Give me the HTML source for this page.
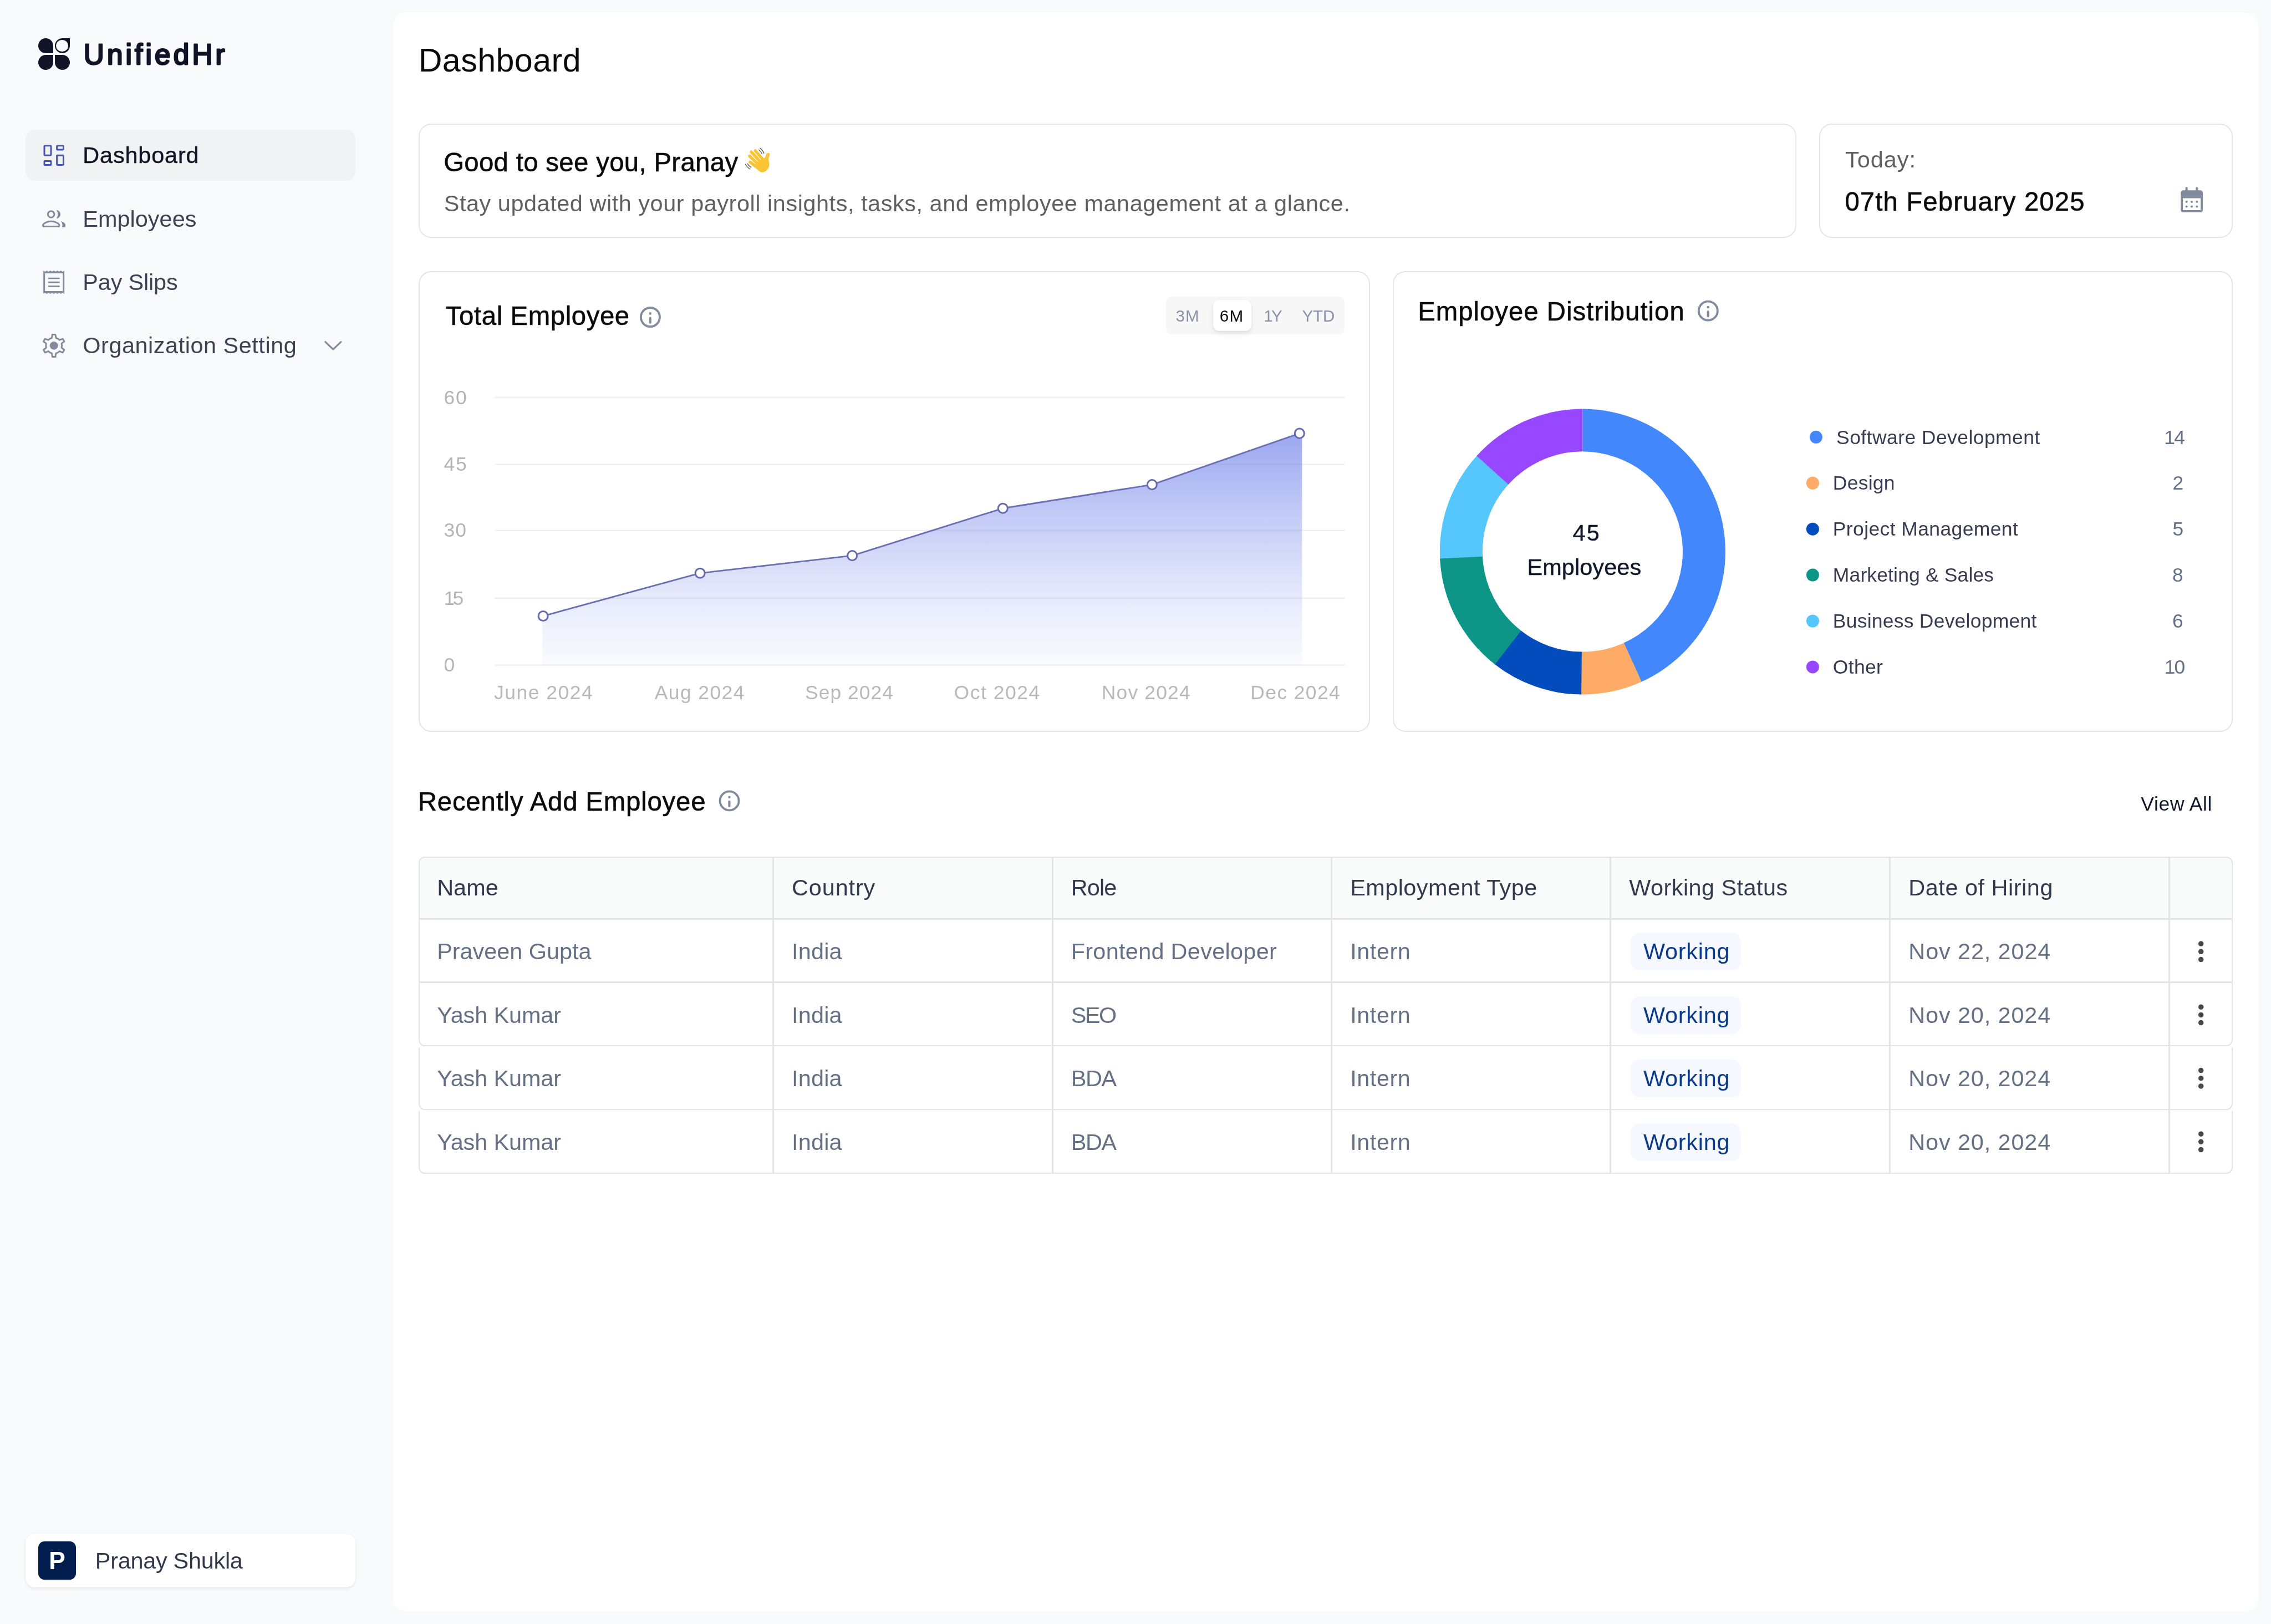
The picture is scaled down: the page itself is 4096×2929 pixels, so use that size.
<!DOCTYPE html>
<html lang="en">
<head>
<meta charset="utf-8">
<title>UnifiedHr – Dashboard</title>
<style>
html,body{margin:0;padding:0;background:#f9fafc;overflow:hidden;width:4096px;height:2929px}
#app{position:relative;width:1440px;height:1029.72px;zoom:2.8444444;background:#f9fafc;font-family:"Liberation Sans",sans-serif;overflow:hidden}
#app div,#app span,#app svg{position:absolute;box-sizing:border-box}
.t{white-space:nowrap;line-height:20px;font-weight:400}
.panel{left:249.33px;top:8px;width:1182.5px;height:1013.7px;background:#fff;border-radius:8px}
.card{background:#fff;border:1px solid #e6e6e6;border-radius:8px}
.card2{background:#fff;border:1px solid #e2e4ea;border-radius:8px}
.navact{left:16.1px;top:82.3px;width:209.3px;height:32.3px;background:#f1f2f4;border-radius:6px}
.user{left:16.2px;top:972.5px;width:209px;height:34.1px;background:#fff;border-radius:6px;box-shadow:0 1px 2px rgba(16,24,40,.07),0 0 1px rgba(16,24,40,.04)}
.avatar{left:24.15px;top:977.4px;width:24.1px;height:24.2px;background:#011d4d;border-radius:4px}
.petal{background:#101426}
.seg{left:739.2px;top:188px;width:113.5px;height:24.1px;background:#f7f7f8;border-radius:4px}
.pill{left:769.3px;top:190.2px;width:24.2px;height:19.8px;background:#fff;border-radius:4px;box-shadow:0 1px 2px rgba(16,24,40,.06),0 2px 5px rgba(16,24,40,.05)}
.badge{left:1034px;width:70px;height:23.9px;background:#f5f8ff;border-radius:6px}
.tb{border:1px solid #e4e4e7}
.vl{width:1px;background:#e4e4e7;top:543.5px;height:200.4px}
.hl{height:1px;background:#e4e4e7;left:265.5px;width:1150px}
</style>
</head>
<body>
<div id="app">
  <!-- sidebar -->
  <div class="petal" style="left:24.2px;top:24.3px;width:9.54px;height:9.54px;border-radius:4.77px 4.77px 0 4.77px"></div>
  <div class="petal" style="left:34.66px;top:24.3px;width:9.54px;height:9.54px;border-radius:4.77px 0 4.77px 4.77px"></div>
  <div style="left:35.63px;top:25.27px;width:7.6px;height:7.6px;border-radius:50%;background:#f9fafc"></div>
  <div class="petal" style="left:24.2px;top:34.76px;width:9.54px;height:9.54px;border-radius:4.77px 0 4.77px 4.77px"></div>
  <div class="petal" style="left:34.66px;top:34.76px;width:9.54px;height:9.54px;border-radius:0 4.77px 4.77px 4.77px"></div>
  <div class="navact"></div>
  <div class="user"></div>
  <div class="avatar"></div>
  <!-- main panel -->
  <div class="panel"></div>
  <div class="card" style="left:265.5px;top:78.4px;width:873.6px;height:72.4px"></div>
  <div class="card" style="left:1153.4px;top:78.4px;width:262.3px;height:72.4px"></div>
  <div class="card2" style="left:265.5px;top:171.8px;width:603.1px;height:292.4px"></div>
  <div class="card2" style="left:883.1px;top:171.8px;width:532.7px;height:292.4px"></div>
  <div class="seg"></div>
  <div class="pill"></div>
  <!-- table -->
  <div style="left:265.5px;top:543px;width:1150.2px;height:40.3px;background:#f9fafa;border-radius:4px 4px 0 0"></div>
  <div class="tb" style="left:265.5px;top:543px;width:1150.2px;height:120.5px;border-radius:4px"></div>
  <div class="tb" style="left:265.3px;top:664.2px;width:1150.5px;height:39.6px;border-top:none;border-radius:0 0 4px 4px"></div>
  <div class="tb" style="left:265.3px;top:704.5px;width:1150.5px;height:39.6px;border-top:none;border-radius:0 0 4px 4px"></div>
  <div class="hl" style="top:582.3px"></div>
  <div class="hl" style="top:622.3px"></div>
  <div class="vl" style="left:489.7px"></div>
  <div class="vl" style="left:666.8px"></div>
  <div class="vl" style="left:843.8px"></div>
  <div class="vl" style="left:1020.75px"></div>
  <div class="vl" style="left:1197.9px"></div>
  <div class="vl" style="left:1374.85px"></div>
  <div class="badge" style="top:591.5px"></div>
  <div class="badge" style="top:631.6px"></div>
  <div class="badge" style="top:671.9px"></div>
  <div class="badge" style="top:712.2px"></div>
<svg style="left:0;top:0" width="1440" height="1030" viewBox="0 0 1440 1030">
<defs><linearGradient id="ag" x1="0" y1="274.8" x2="0" y2="421.7" gradientUnits="userSpaceOnUse"><stop offset="0" stop-color="#5d71e6" stop-opacity="0.62"/><stop offset="0.35" stop-color="#5d71e6" stop-opacity="0.37"/><stop offset="0.7" stop-color="#5d71e6" stop-opacity="0.155"/><stop offset="1" stop-color="#5d71e6" stop-opacity="0.03"/></linearGradient></defs>
<text x="53.0" y="40.7" font-family="Liberation Sans, sans-serif" font-size="18.0" fill="#101426" stroke="#101426" stroke-width="1.0" stroke-linejoin="round" textLength="89.6" lengthAdjust="spacing">UnifiedHr</text>
<g fill="none" stroke="#4353b8" stroke-width="1.04">
<rect x="28.12" y="92.42" width="4.23" height="6.06" rx="0.35"/>
<rect x="36.07" y="92.42" width="4.16" height="2.51" rx="0.35"/>
<rect x="28.12" y="102.12" width="4.23" height="2.46" rx="0.35"/>
<rect x="36.07" y="98.52" width="4.16" height="6.06" rx="0.35"/>
</g>
<g transform="translate(21.0938,124.8047) scale(0.017318)" fill="#828a9d">
<circle cx="652" cy="640" r="118" fill="none" stroke="#828a9d" stroke-width="60"/>
<path d="M395,1085 L915,1085 Q955,1085 955,1045 C955,975 800,900 652,900 C505,900 355,975 355,1045 Q355,1085 395,1085 Z" fill="none" stroke="#828a9d" stroke-width="60" stroke-linejoin="round"/>
<path d="M845,485 C945,490 995,560 995,640 C995,720 945,785 845,790 C880,750 897,700 897,640 C897,580 880,530 845,485 Z"/>
<path d="M1015,895 C1110,920 1180,970 1180,1045 C1180,1090 1155,1115 1120,1115 L1050,1115 C1080,1060 1075,980 1015,895 Z"/>
</g>
<g transform="translate(21.0938,165.2344) scale(0.017318)" fill="#828a9d">
<path fill-rule="evenodd" d="M370,365 L430,405 L495,365 L560,405 L625,365 L690,405 L755,365 L820,405 L880,365 L945,405 L1010,365 L1075,405 L1140,365 L1140,1220 L1075,1180 L1010,1220 L945,1180 L880,1220 L820,1180 L755,1220 L690,1180 L625,1220 L560,1180 L495,1220 L430,1180 L370,1220 Z M430,465 L1080,465 L1080,1115 L430,1115 Z"/>
<path d="M572,650 H943" stroke="#828a9d" stroke-width="55" stroke-linecap="round" fill="none"/>
<path d="M572,795 H943" stroke="#828a9d" stroke-width="55" stroke-linecap="round" fill="none"/>
<path d="M572,940 H943" stroke="#828a9d" stroke-width="55" stroke-linecap="round" fill="none"/>
</g>
<g transform="translate(21.0938,204.9609) scale(0.017318)">
<path d="M679.4,537.9 L699.4,413.8 L810.6,413.8 L830.6,537.9 A292,292 0 0 1 961.5,613.5 L1079.0,568.7 L1134.6,665.1 L1037.1,744.4 A292,292 0 0 1 1037.1,895.6 L1134.6,974.9 L1079.0,1071.3 L961.5,1026.5 A292,292 0 0 1 830.6,1102.1 L810.6,1226.2 L699.4,1226.2 L679.4,1102.1 A292,292 0 0 1 548.5,1026.5 L431.0,1071.3 L375.4,974.9 L472.9,895.6 A292,292 0 0 1 472.9,744.4 L375.4,665.1 L431.0,568.7 L548.5,613.5 A292,292 0 0 1 679.4,537.9 Z" fill="none" stroke="#828a9d" stroke-width="60" stroke-linejoin="round"/>
<circle cx="755" cy="820" r="150" fill="#828a9d"/>
</g>
<path d="M206.3,216.8 L211.25,221.5 L216.2,216.8" fill="none" stroke="#828a9d" stroke-width="1.1" stroke-linecap="round" stroke-linejoin="round"/>
<g transform="translate(412.35,201.1)"><circle r="5.98" fill="none" stroke="#828a9d" stroke-width="1.36"/><circle cx="-0.05" cy="-2.33" r="0.8" fill="#828a9d"/><path d="M-0.05,0.5 V3.4" stroke="#828a9d" stroke-width="1.45" stroke-linecap="round"/></g>
<g transform="translate(1083.1,197.1)"><circle r="5.98" fill="none" stroke="#828a9d" stroke-width="1.36"/><circle cx="-0.05" cy="-2.33" r="0.8" fill="#828a9d"/><path d="M-0.05,0.5 V3.4" stroke="#828a9d" stroke-width="1.45" stroke-linecap="round"/></g>
<g transform="translate(462.5,507.8)"><circle r="5.98" fill="none" stroke="#828a9d" stroke-width="1.36"/><circle cx="-0.05" cy="-2.33" r="0.8" fill="#828a9d"/><path d="M-0.05,0.5 V3.4" stroke="#828a9d" stroke-width="1.45" stroke-linecap="round"/></g>
<g fill="#828a9d">
<path fill-rule="evenodd" d="M1384.25,120.66 H1395.3 A1.45,1.45 0 0 1 1396.75,122.11 V133.15 A1.45,1.45 0 0 1 1395.3,134.6 H1384.25 A1.45,1.45 0 0 1 1382.8,133.15 V122.11 A1.45,1.45 0 0 1 1384.25,120.66 Z M1384.1,125.66 V133.28 H1395.4 V125.66 Z"/>
<path d="M1386.45,119.3 V122 M1393.0,119.3 V122" stroke="#828a9d" stroke-width="1.45" stroke-linecap="round"/>
<circle cx="1386.45" cy="127.9" r="0.73"/>
<circle cx="1386.45" cy="130.95" r="0.73"/>
<circle cx="1389.74" cy="127.9" r="0.73"/>
<circle cx="1389.74" cy="130.95" r="0.73"/>
<circle cx="1393.0" cy="127.9" r="0.73"/>
<circle cx="1393.0" cy="130.95" r="0.73"/>
</g>
<g transform="translate(465.8203,87.8906) scale(0.017318)">
<path d="M770,930 L1020,700 C1060,730 1100,720 1125,670 C1140,620 1140,570 1200,535 C1250,510 1300,540 1290,590 C1270,650 1235,700 1245,790 C1275,900 1285,1000 1220,1100 C1150,1210 1010,1280 900,1200 C840,1150 800,1040 770,930 Z" fill="#fcc332"/>
<path d="M757,442 L1010,735" stroke="#fcc332" stroke-width="108" stroke-linecap="round"/>
<path d="M607,485 L905,810" stroke="#fcc332" stroke-width="108" stroke-linecap="round"/>
<path d="M547,640 L845,925" stroke="#fcc332" stroke-width="108" stroke-linecap="round"/>
<path d="M565,860 L860,1085" stroke="#fcc332" stroke-width="108" stroke-linecap="round"/>
<path d="M770,930 L1000,1150 L900,1200 Z" fill="#fcc332"/>
<g fill="none" stroke="#555" stroke-width="27" stroke-linecap="round">
<path d="M932,352 C1000,400 1050,470 1075,540"/><path d="M888,412 C940,450 980,505 1000,560"/>
<path d="M395,940 C430,1010 490,1075 568,1115"/><path d="M467,917 C495,970 540,1015 598,1048"/>
</g></g>
<path d="M313.8,252.0 H852.7" stroke="#f0f0f5" stroke-width="1"/>
<path d="M313.8,294.4 H852.7" stroke="#f0f0f5" stroke-width="1"/>
<path d="M313.8,336.3 H852.7" stroke="#f0f0f5" stroke-width="1"/>
<path d="M313.8,379.3 H852.7" stroke="#f0f0f5" stroke-width="1"/>
<path d="M313.8,421.7 H852.7" stroke="#f0f0f5" stroke-width="1"/>
<path d="M343.9,421.7 L343.9,390.75 L344.4,390.6 L443.9,363.4 L540.4,352.3 L635.9,322.3 L730.5,307.3 L824.0,274.8 L825.6,274.3 L825.6,421.7 Z" fill="url(#ag)"/>
<path d="M344.4,390.6 L443.9,363.4 L540.4,352.3 L635.9,322.3 L730.5,307.3 L824.0,274.8" fill="none" stroke="#6b70b2" stroke-width="1.0" stroke-linejoin="round"/>
<circle cx="344.4" cy="390.6" r="3.0" fill="#fff" stroke="#666bb0" stroke-width="1.05"/>
<circle cx="443.9" cy="363.4" r="3.0" fill="#fff" stroke="#666bb0" stroke-width="1.05"/>
<circle cx="540.4" cy="352.3" r="3.0" fill="#fff" stroke="#666bb0" stroke-width="1.05"/>
<circle cx="635.9" cy="322.3" r="3.0" fill="#fff" stroke="#666bb0" stroke-width="1.05"/>
<circle cx="730.5" cy="307.3" r="3.0" fill="#fff" stroke="#666bb0" stroke-width="1.05"/>
<circle cx="824.0" cy="274.8" r="3.0" fill="#fff" stroke="#666bb0" stroke-width="1.05"/>
<path d="M1003.50,259.25 A90.55,90.55 0 0 1 1040.47,432.46 L1029.43,407.76 A63.5,63.5 0 0 0 1003.50,286.30 Z" fill="#4287fb"/>
<path d="M1040.91,432.26 A90.55,90.55 0 0 1 1002.24,440.34 L1002.61,413.29 A63.5,63.5 0 0 0 1029.73,407.63 Z" fill="#fdab66"/>
<path d="M1002.71,440.35 A90.55,90.55 0 0 1 947.50,420.96 L964.23,399.70 A63.5,63.5 0 0 0 1002.95,413.30 Z" fill="#024cbe"/>
<path d="M947.88,421.25 A90.55,90.55 0 0 1 913.04,353.75 L940.06,352.57 A63.5,63.5 0 0 0 964.49,399.91 Z" fill="#0d9688"/>
<path d="M913.06,354.22 A90.55,90.55 0 0 1 936.69,288.68 L956.65,306.94 A63.5,63.5 0 0 0 940.08,352.90 Z" fill="#56c7fd"/>
<path d="M936.37,289.03 A90.55,90.55 0 0 1 1003.50,259.25 L1003.50,286.30 A63.5,63.5 0 0 0 956.42,307.19 Z" fill="#9747ff"/>
<circle cx="1151.5" cy="277.14" r="4.05" fill="#4287fb"/>
<circle cx="1149.4" cy="306.3" r="4.05" fill="#fdab66"/>
<circle cx="1149.4" cy="335.45" r="4.05" fill="#024cbe"/>
<circle cx="1149.4" cy="364.6" r="4.05" fill="#0d9688"/>
<circle cx="1149.4" cy="393.75" r="4.05" fill="#56c7fd"/>
<circle cx="1149.4" cy="422.9" r="4.05" fill="#9747ff"/>
<circle cx="1395.6" cy="598.4" r="1.67" fill="#4a4a4a"/>
<circle cx="1395.6" cy="603.4" r="1.67" fill="#4a4a4a"/>
<circle cx="1395.6" cy="608.4" r="1.67" fill="#4a4a4a"/>
<circle cx="1395.6" cy="638.5" r="1.67" fill="#4a4a4a"/>
<circle cx="1395.6" cy="643.5" r="1.67" fill="#4a4a4a"/>
<circle cx="1395.6" cy="648.5" r="1.67" fill="#4a4a4a"/>
<circle cx="1395.6" cy="678.7" r="1.67" fill="#4a4a4a"/>
<circle cx="1395.6" cy="683.7" r="1.67" fill="#4a4a4a"/>
<circle cx="1395.6" cy="688.7" r="1.67" fill="#4a4a4a"/>
<circle cx="1395.6" cy="719.0" r="1.67" fill="#4a4a4a"/>
<circle cx="1395.6" cy="724.0" r="1.67" fill="#4a4a4a"/>
<circle cx="1395.6" cy="729.0" r="1.67" fill="#4a4a4a"/>
</svg>
<div id="txt" style="left:0;top:0;width:1440px;height:1030px;will-change:transform">
<span class="t" style="left:52.50px;top:88.65px;font-size:14.56px;letter-spacing:0.292px;color:#0f1324;-webkit-text-stroke:0.15px #0f1324">Dashboard</span>
<span class="t" style="left:52.50px;top:128.85px;font-size:14.56px;letter-spacing:0.012px;color:#3e4252">Employees</span>
<span class="t" style="left:52.50px;top:169.05px;font-size:14.56px;letter-spacing:-0.056px;color:#3e4252">Pay Slips</span>
<span class="t" style="left:52.50px;top:209.25px;font-size:14.56px;letter-spacing:0.189px;color:#3e4252">Organization Setting</span>
<span class="t" style="left:31.05px;top:979.89px;font-size:15.60px;letter-spacing:-0.719px;color:#ffffff;font-weight:700">P</span>
<span class="t" style="left:60.40px;top:979.65px;font-size:14.56px;letter-spacing:-0.094px;color:#30374a">Pranay Shukla</span>
<span class="t" style="left:265.30px;top:28.64px;font-size:20.80px;letter-spacing:0.156px;color:#0a0a0a">Dashboard</span>
<span class="t" style="left:281.30px;top:93.13px;font-size:16.64px;letter-spacing:0.118px;color:#0a0a0a;-webkit-text-stroke:0.2px #0a0a0a">Good to see you, Pranay</span>
<span class="t" style="left:281.50px;top:119.05px;font-size:14.56px;letter-spacing:0.195px;color:#606060">Stay updated with your payroll insights, tasks, and employee management at a glance.</span>
<span class="t" style="left:1170.00px;top:91.25px;font-size:14.56px;letter-spacing:0.357px;color:#606060">Today:</span>
<span class="t" style="left:1169.80px;top:118.03px;font-size:16.64px;letter-spacing:0.394px;color:#0a0a0a;-webkit-text-stroke:0.2px #0a0a0a">07th February 2025</span>
<span class="t" style="left:282.60px;top:190.53px;font-size:16.64px;letter-spacing:0.210px;color:#0a0a0a;-webkit-text-stroke:0.2px #0a0a0a">Total Employee</span>
<span class="t" style="left:745.49px;top:190.40px;font-size:10.40px;letter-spacing:0.391px;color:#8a92a6">3M</span>
<span class="t" style="left:773.38px;top:190.40px;font-size:10.40px;letter-spacing:0.398px;color:#0a0a0a">6M</span>
<span class="t" style="left:801.31px;top:190.40px;font-size:10.40px;letter-spacing:-0.930px;color:#8a92a6">1Y</span>
<span class="t" style="left:825.65px;top:190.40px;font-size:10.40px;letter-spacing:-0.047px;color:#8a92a6">YTD</span>
<span class="t" style="left:281.40px;top:242.08px;font-size:12.48px;letter-spacing:0.641px;color:#b5b5b5">60</span>
<span class="t" style="left:281.40px;top:284.48px;font-size:12.48px;letter-spacing:0.609px;color:#b5b5b5">45</span>
<span class="t" style="left:281.40px;top:326.38px;font-size:12.48px;letter-spacing:0.367px;color:#b5b5b5">30</span>
<span class="t" style="left:281.40px;top:369.38px;font-size:12.48px;letter-spacing:-1.242px;color:#b5b5b5">15</span>
<span class="t" style="left:281.40px;top:411.78px;font-size:12.48px;letter-spacing:0.609px;color:#b5b5b5">0</span>
<span class="t" style="left:313.25px;top:429.18px;font-size:12.48px;letter-spacing:0.528px;color:#b9b9b9">June 2024</span>
<span class="t" style="left:415.10px;top:429.18px;font-size:12.48px;letter-spacing:0.489px;color:#b9b9b9">Aug 2024</span>
<span class="t" style="left:510.50px;top:429.18px;font-size:12.48px;letter-spacing:0.351px;color:#b9b9b9">Sep 2024</span>
<span class="t" style="left:604.90px;top:429.18px;font-size:12.48px;letter-spacing:0.536px;color:#b9b9b9">Oct 2024</span>
<span class="t" style="left:698.50px;top:429.18px;font-size:12.48px;letter-spacing:0.401px;color:#b9b9b9">Nov 2024</span>
<span class="t" style="left:792.90px;top:429.18px;font-size:12.48px;letter-spacing:0.476px;color:#b9b9b9">Dec 2024</span>
<span class="t" style="left:899.00px;top:187.63px;font-size:16.64px;letter-spacing:0.356px;color:#0a0a0a;-webkit-text-stroke:0.2px #0a0a0a">Employee Distribution</span>
<span class="t" style="left:997.19px;top:327.95px;font-size:14.56px;letter-spacing:0.828px;color:#0f172a;-webkit-text-stroke:0.15px #0f172a">45</span>
<span class="t" style="left:968.37px;top:349.95px;font-size:14.56px;letter-spacing:0.037px;color:#0f172a;-webkit-text-stroke:0.15px #0f172a">Employees</span>
<span class="t" style="left:1164.40px;top:267.38px;font-size:12.48px;letter-spacing:0.152px;color:#363b50">Software Development</span>
<span class="t" style="left:1372.26px;top:267.38px;font-size:12.48px;letter-spacing:-0.617px;color:#667085">14</span>
<span class="t" style="left:1162.20px;top:296.48px;font-size:12.48px;letter-spacing:0.089px;color:#363b50">Design</span>
<span class="t" style="left:1377.57px;top:296.48px;font-size:12.48px;letter-spacing:0.391px;color:#667085">2</span>
<span class="t" style="left:1162.20px;top:325.68px;font-size:12.48px;letter-spacing:0.137px;color:#363b50">Project Management</span>
<span class="t" style="left:1377.60px;top:325.68px;font-size:12.48px;letter-spacing:0.359px;color:#667085">5</span>
<span class="t" style="left:1162.20px;top:354.83px;font-size:12.48px;letter-spacing:0.050px;color:#363b50">Marketing &amp; Sales</span>
<span class="t" style="left:1377.46px;top:354.83px;font-size:12.48px;letter-spacing:0.500px;color:#667085">8</span>
<span class="t" style="left:1162.20px;top:383.98px;font-size:12.48px;letter-spacing:0.084px;color:#363b50">Business Development</span>
<span class="t" style="left:1377.45px;top:383.98px;font-size:12.48px;letter-spacing:0.516px;color:#667085">6</span>
<span class="t" style="left:1162.20px;top:413.18px;font-size:12.48px;letter-spacing:0.106px;color:#363b50">Other</span>
<span class="t" style="left:1372.45px;top:413.18px;font-size:12.48px;letter-spacing:-0.711px;color:#667085">10</span>
<span class="t" style="left:265.00px;top:498.43px;font-size:16.64px;letter-spacing:0.285px;color:#0a0a0a;-webkit-text-stroke:0.2px #0a0a0a">Recently Add Employee</span>
<span class="t" style="left:1357.50px;top:499.78px;font-size:12.48px;letter-spacing:0.229px;color:#0f172a">View All</span>
<span class="t" style="left:277.10px;top:553.05px;font-size:14.56px;letter-spacing:0.008px;color:#323a4d">Name</span>
<span class="t" style="left:502.05px;top:553.05px;font-size:14.56px;letter-spacing:0.310px;color:#323a4d">Country</span>
<span class="t" style="left:679.10px;top:553.05px;font-size:14.56px;letter-spacing:-0.289px;color:#323a4d">Role</span>
<span class="t" style="left:856.10px;top:553.05px;font-size:14.56px;letter-spacing:0.164px;color:#323a4d">Employment Type</span>
<span class="t" style="left:1033.00px;top:553.05px;font-size:14.56px;letter-spacing:0.157px;color:#323a4d">Working Status</span>
<span class="t" style="left:1210.20px;top:553.05px;font-size:14.56px;letter-spacing:0.188px;color:#323a4d">Date of Hiring</span>
<span class="t" style="left:277.10px;top:593.55px;font-size:14.56px;letter-spacing:-0.004px;color:#667085">Praveen Gupta</span>
<span class="t" style="left:502.05px;top:593.55px;font-size:14.56px;letter-spacing:0.062px;color:#667085">India</span>
<span class="t" style="left:679.10px;top:593.55px;font-size:14.56px;letter-spacing:0.106px;color:#667085">Frontend Developer</span>
<span class="t" style="left:856.10px;top:593.55px;font-size:14.56px;letter-spacing:0.201px;color:#667085">Intern</span>
<span class="t" style="left:1042.00px;top:593.55px;font-size:14.56px;letter-spacing:0.259px;color:#0b3a87">Working</span>
<span class="t" style="left:1210.20px;top:593.55px;font-size:14.56px;letter-spacing:0.310px;color:#667085">Nov 22, 2024</span>
<span class="t" style="left:277.10px;top:633.75px;font-size:14.56px;letter-spacing:-0.037px;color:#667085">Yash Kumar</span>
<span class="t" style="left:502.05px;top:633.75px;font-size:14.56px;letter-spacing:0.062px;color:#667085">India</span>
<span class="t" style="left:679.10px;top:633.75px;font-size:14.56px;letter-spacing:-0.875px;color:#667085">SEO</span>
<span class="t" style="left:856.10px;top:633.75px;font-size:14.56px;letter-spacing:0.201px;color:#667085">Intern</span>
<span class="t" style="left:1042.00px;top:633.75px;font-size:14.56px;letter-spacing:0.259px;color:#0b3a87">Working</span>
<span class="t" style="left:1210.20px;top:633.75px;font-size:14.56px;letter-spacing:0.305px;color:#667085">Nov 20, 2024</span>
<span class="t" style="left:277.10px;top:673.95px;font-size:14.56px;letter-spacing:-0.037px;color:#667085">Yash Kumar</span>
<span class="t" style="left:502.05px;top:673.95px;font-size:14.56px;letter-spacing:0.062px;color:#667085">India</span>
<span class="t" style="left:679.10px;top:673.95px;font-size:14.56px;letter-spacing:-0.490px;color:#667085">BDA</span>
<span class="t" style="left:856.10px;top:673.95px;font-size:14.56px;letter-spacing:0.201px;color:#667085">Intern</span>
<span class="t" style="left:1042.00px;top:673.95px;font-size:14.56px;letter-spacing:0.259px;color:#0b3a87">Working</span>
<span class="t" style="left:1210.20px;top:673.95px;font-size:14.56px;letter-spacing:0.305px;color:#667085">Nov 20, 2024</span>
<span class="t" style="left:277.10px;top:714.25px;font-size:14.56px;letter-spacing:-0.037px;color:#667085">Yash Kumar</span>
<span class="t" style="left:502.05px;top:714.25px;font-size:14.56px;letter-spacing:0.062px;color:#667085">India</span>
<span class="t" style="left:679.10px;top:714.25px;font-size:14.56px;letter-spacing:-0.490px;color:#667085">BDA</span>
<span class="t" style="left:856.10px;top:714.25px;font-size:14.56px;letter-spacing:0.201px;color:#667085">Intern</span>
<span class="t" style="left:1042.00px;top:714.25px;font-size:14.56px;letter-spacing:0.259px;color:#0b3a87">Working</span>
<span class="t" style="left:1210.20px;top:714.25px;font-size:14.56px;letter-spacing:0.305px;color:#667085">Nov 20, 2024</span>
</div>
</div>
</body>
</html>
